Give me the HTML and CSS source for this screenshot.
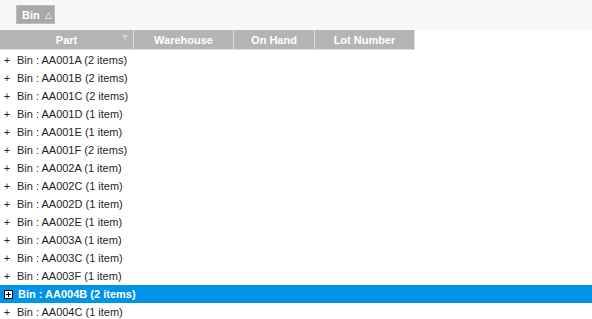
FILE: index.html
```html
<!doctype html>
<html>
<head>
<meta charset="utf-8">
<title>Bins</title>
<link rel="stylesheet" href="styles.css">
</head>
<body>
	<div class="grouppanel">
		<span class="groupbtn">Bin <span class="sorticon">&#9651;</span></span>
	</div>

	<div class="header">
		<div class="hcell part">Part
			<svg class="filter" width="6" height="6" viewBox="0 0 6 6"><path d="M0 0H6L3.5 3V6H2.5V3Z" fill="#d8d8d8"/></svg>
		</div>
		<div class="hcell wh">Warehouse</div>
		<div class="hcell oh">On Hand</div>
		<div class="hcell lot">Lot Number</div>
	</div>

	<div class="rows">
		<div class="row"><span class="exp">+</span>Bin : AA001A (2 items)</div>
		<div class="row"><span class="exp">+</span>Bin : AA001B (2 items)</div>
		<div class="row"><span class="exp">+</span>Bin : AA001C (2 items)</div>
		<div class="row"><span class="exp">+</span>Bin : AA001D (1 item)</div>
		<div class="row"><span class="exp">+</span>Bin : AA001E (1 item)</div>
		<div class="row"><span class="exp">+</span>Bin : AA001F (2 items)</div>
		<div class="row"><span class="exp">+</span>Bin : AA002A (1 item)</div>
		<div class="row"><span class="exp">+</span>Bin : AA002C (1 item)</div>
		<div class="row"><span class="exp">+</span>Bin : AA002D (1 item)</div>
		<div class="row"><span class="exp">+</span>Bin : AA002E (1 item)</div>
		<div class="row"><span class="exp">+</span>Bin : AA003A (1 item)</div>
		<div class="row"><span class="exp">+</span>Bin : AA003C (1 item)</div>
		<div class="row"><span class="exp">+</span>Bin : AA003F (1 item)</div>
		<div class="row selected">
			<svg class="box" width="9" height="9" viewBox="0 0 9 9"><rect x="0.5" y="0.5" width="8" height="8" fill="#ffffff" stroke="#000000"/><path d="M2 4.5H7M4.5 2V7" stroke="#000000"/></svg>Bin : AA004B (2 items)
		</div>
		<div class="row"><span class="exp">+</span>Bin : AA004C (1 item)</div>
	</div>
</body>
</html>
```

FILE: styles.css
```css
/* grid de bins */
body {margin: 0; background-color: #ffffff; font-family: "Liberation Sans", Arial, sans-serif; font-size: 11px; color: #1e1e1e;}

.grouppanel {height: 30px; background-color: #f7f7f7; padding-left: 16px; display: flex; align-items: flex-start; padding-top: 5px; box-sizing: border-box;}
.groupbtn {height: 19px; width: 39px; box-sizing: border-box; background-color: #a9a9a9; border: solid 1px #bdbdbd; color: #ffffff; font-size: 11px; font-weight: bold; display: flex; align-items: center; padding-left: 5px; gap: 5px;}
.groupbtn .sorticon {font-size: 9px; font-weight: normal;}

.header {display: flex; width: 415px; height: 20px;}
.hcell {height: 20px; box-sizing: border-box; background-color: #b4b4b4; border-right: solid 1px #dcdcdc; border-bottom: solid 1px #dcdcdc; color: #ffffff; font-weight: bold; display: flex; align-items: center; justify-content: center; position: relative;}
.hcell.part {width: 134px;}
.hcell.wh {width: 100px;}
.hcell.oh {width: 81px;}
.hcell.lot {width: 100px;}
.hcell .filter {position: absolute; right: 5px; top: 5px;}

.rows {padding-top: 1px;}
.row {height: 18px; display: flex; align-items: center; white-space: nowrap;}
.row .exp {width: 17px; text-align: center; box-sizing: border-box; padding-right: 3px; font-size: 11px;}
.row.selected {background-color: #0094e8; color: #ffffff; font-weight: bold;}
.row .box {margin-left: 4px; margin-right: 5px;}
```
